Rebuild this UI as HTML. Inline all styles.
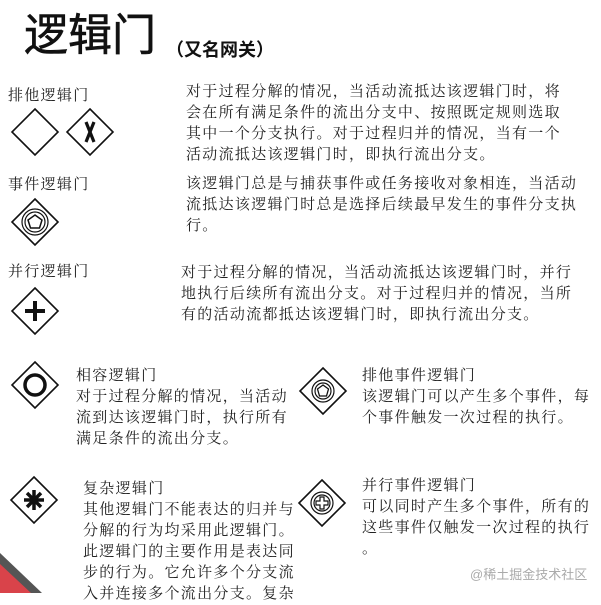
<!DOCTYPE html>
<html><head><meta charset="utf-8"><style>
body{margin:0;width:601px;height:593px;background:#fff;position:relative;overflow:hidden;font-family:"Liberation Serif","Noto Serif CJK SC",serif;color:#222}
.t{position:absolute;font-size:15px;line-height:18px;letter-spacing:1.3px;white-space:nowrap}
svg{position:absolute;left:0;top:0}
</style></head><body>
<div style="position:absolute;left:24px;top:10px;font-family:'Liberation Sans','Noto Sans CJK SC',sans-serif;font-size:44px;line-height:52px;color:#111;-webkit-text-stroke:0.6px #111;">逻辑门</div>
<div style="position:absolute;left:166px;top:38px;font-family:'Liberation Sans','Noto Sans CJK SC',sans-serif;font-size:18px;font-weight:bold;line-height:24px;color:#111;">（又名网关）</div>

<div class="t" style="left:8px;top:87px">排他逻辑门</div>
<div class="t" style="left:186px;top:82px;line-height:21px">对于过程分解的情况，当活动流抵达该逻辑门时，将<br>会在所有满足条件的流出分支中、按照既定规则选取<br>其中一个分支执行。对于过程归并的情况，当有一个<br>活动流抵达该逻辑门时，即执行流出分支。</div>

<div class="t" style="left:8px;top:176px">事件逻辑门</div>
<div class="t" style="left:186px;top:174px;line-height:21px">该逻辑门总是与捕获事件或任务接收对象相连，当活动<br>流抵达该逻辑门时总是选择后续最早发生的事件分支执<br>行。</div>

<div class="t" style="left:8px;top:263px">并行逻辑门</div>
<div class="t" style="left:181px;top:263px;line-height:21px">对于过程分解的情况，当活动流抵达该逻辑门时，并行<br>地执行后续所有流出分支。对于过程归并的情况，当所<br>有的活动流都抵达该逻辑门时，即执行流出分支。</div>

<div class="t" style="left:76px;top:366px;line-height:21px">相容逻辑门<br>对于过程分解的情况，当活动<br>流到达该逻辑门时，执行所有<br>满足条件的流出分支。</div>

<div class="t" style="left:362px;top:366px;line-height:21px">排他事件逻辑门<br>该逻辑门可以产生多个事件，每<br>个事件触发一次过程的执行。</div>

<div class="t" style="left:83px;top:479px;line-height:21px">复杂逻辑门<br>其他逻辑门不能表达的归并与<br>分解的行为均采用此逻辑门。<br>此逻辑门的主要作用是表达同<br>步的行为。它允许多个分支流<br>入并连接多个流出分支。复杂</div>

<div class="t" style="left:362px;top:476px;line-height:21px">并行事件逻辑门<br>可以同时产生多个事件，所有的<br>这些事件仅触发一次过程的执行<br>。</div>

<div style="position:absolute;left:470px;top:564px;font-family:'Liberation Sans','Noto Sans CJK SC',sans-serif;font-size:13px;color:#aaa">@稀土掘金技术社区</div>

<svg width="601" height="593" viewBox="0 0 601 593" fill="none" stroke="#111">
<g stroke-width="1.6">
<path d="M35 109 L58 132 L35 155 L12 132 Z"/>
<path d="M90 109 L113 132 L90 155 L67 132 Z"/>
<path d="M35 199 L58 222 L35 245 L12 222 Z"/>
<path d="M35 288 L58 311 L35 334 L12 311 Z"/>
<path d="M35 362 L58 385 L35 408 L12 385 Z"/>
<path d="M34 477 L57 500 L34 523 L11 500 Z"/>
<path d="M323 368 L346 391 L323 414 L300 391 Z"/>
<path d="M322 480 L345 503 L322 526 L299 503 Z"/>
</g>
<path d="M86 122 L94 142 M94 122 L86 142" stroke-width="3.2"/>
<circle cx="35" cy="222" r="13" stroke-width="1.2"/>
<circle cx="35" cy="222" r="10" stroke-width="1.2"/>
<path d="M35 215 L42 220 L39.5 228 L30.5 228 L28 220 Z" stroke-width="1.5"/>
<path d="M35 301 V321 M25 311 H45" stroke-width="4"/>
<circle cx="35" cy="385" r="10" stroke-width="3.5"/>
<path d="M34 490 V510 M24 500 H44 M27 493 L41 507 M41 493 L27 507" stroke-width="3.5"/>
<circle cx="323" cy="391" r="11" stroke-width="1.2"/>
<circle cx="323" cy="391" r="8" stroke-width="1.2"/>
<path d="M323 385 L328.5 389 L326.5 396 L319.5 396 L317.5 389 Z" stroke-width="1.3"/>
<circle cx="322" cy="503" r="11" stroke-width="1.2"/>
<circle cx="322" cy="503" r="8" stroke-width="1.2"/>
<path d="M320 497 H324 V501 H328 V505 H324 V509 H320 V505 H316 V501 H320 Z" stroke-width="1.2"/>
<path d="M0 553 L42 593 L0 593 Z" fill="#555" stroke="none"/>
<path d="M0 564 L31 593 L0 593 Z" fill="#d9434a" stroke="none"/>
</svg>
</body></html>
